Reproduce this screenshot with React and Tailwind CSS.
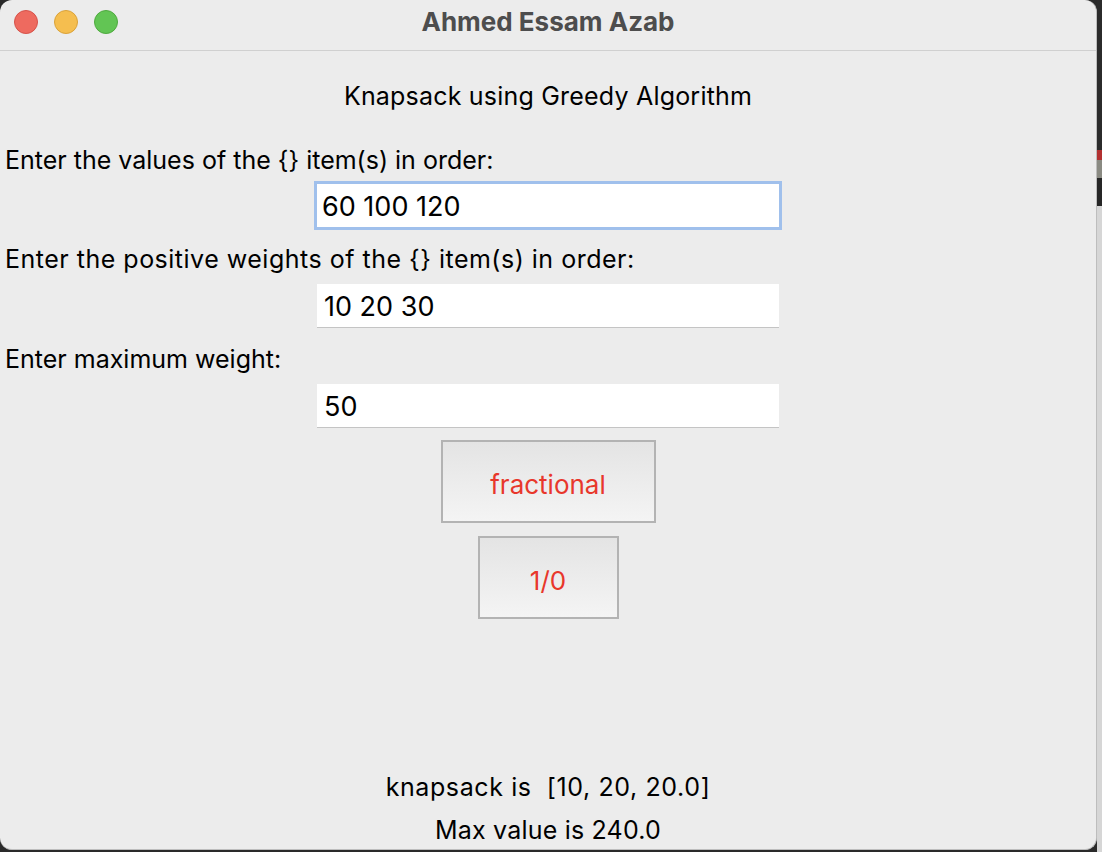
import React from 'react';

const font = { fontFamily: 'Inter, "Noto Sans", sans-serif' };

const TrafficLights = () => (
    <div className="absolute left-[14px] top-[10px] flex gap-[16px]">
        <div className="w-[24px] h-[24px] rounded-full bg-[#ee6a5f] border border-[#d5524a]" />
        <div className="w-[24px] h-[24px] rounded-full bg-[#f5be4f] border border-[#d9a23a]" />
        <div className="w-[24px] h-[24px] rounded-full bg-[#62c554] border border-[#4fa93f]" />
    </div>
);

const Field = ({ value, focused }) => (
    <div
        className={
            focused
                ? 'w-[468px] h-[49px] border-[3px] border-[#a0c0ec] bg-white flex items-center pl-[5px] pt-[2px]'
                : 'w-[462px] h-[44px] bg-white border-b border-[#c4c4c4] flex items-center pl-[7px] pt-[2px]'
        }
    >
        <span className="text-[27px] text-black leading-none">{value}</span>
    </div>
);

const Btn = ({ label, w }) => (
    <button
        className={`${w} h-[83px] border-2 border-[#b3b3b3] bg-gradient-to-b from-[#e4e4e4] to-[#f4f4f4] text-[#e8372b] text-[26px] pt-[6px]`}
    >
        {label}
    </button>
);

export default function App() {
    return (
        <div className="w-[1102px] h-[852px] bg-[#2a2a2a] flex overflow-hidden" style={font}>
            {/* Window */}
            <div className="relative w-[1097px] h-[850px] bg-[#ececec] rounded-[12px] border-r border-b border-[#bdbdbd] flex flex-col overflow-hidden">
                {/* Title bar */}
                <div className="relative h-[51px] border-b border-[#d0d0d0] flex items-center justify-center shrink-0">
                    <TrafficLights />
                    <span className="text-[26px] font-bold text-[#4d4d4d] -mt-[7px]">Ahmed Essam Azab</span>
                </div>

                <div className="flex flex-col items-center text-[25px] text-black">
                    <div className="mt-[33px] h-[24px] leading-[24px] tracking-[0.2px]">Knapsack using Greedy Algorithm</div>

                    <div className="self-start ml-[5px] mt-[40px] h-[24px] leading-[24px]">
                        Enter the values of the {'{}'} item(s) in order:
                    </div>
                    <div className="mt-[9px]">
                        <Field value="60 100 120" focused />
                    </div>

                    <div className="self-start ml-[5px] mt-[17px] h-[24px] leading-[24px] tracking-[0.5px]">
                        Enter the positive weights of the {'{}'} item(s) in order:
                    </div>
                    <div className="mt-[13px]">
                        <Field value="10 20 30" />
                    </div>

                    <div className="self-start ml-[5px] mt-[19px] h-[24px] leading-[24px]">
                        Enter maximum weight:
                    </div>
                    <div className="mt-[13px]">
                        <Field value="50" />
                    </div>

                    <div className="mt-[12px]">
                        <Btn label="fractional" w="w-[215px]" />
                    </div>
                    <div className="mt-[13px]">
                        <Btn label="1/0" w="w-[141px]" />
                    </div>

                    <div className="mt-[156px] h-[24px] leading-[24px] whitespace-pre tracking-[0.6px]">knapsack is  [10, 20, 20.0]</div>
                    <div className="mt-[19px] h-[24px] leading-[24px] tracking-[0.2px]">Max value is 240.0</div>
                </div>
            </div>

            {/* Desktop strip behind the window */}
            <div className="flex flex-col w-[5px] h-[852px]">
                <div className="h-[150px] bg-[#2b2b2b]" />
                <div className="h-[10px] bg-[#b23030]" />
                <div className="h-[18px] bg-[#8a8a82]" />
                <div className="h-[28px] bg-[#262626]" />
                <div className="flex-1 bg-[#d6d6d6]" />
            </div>
        </div>
    );
}
